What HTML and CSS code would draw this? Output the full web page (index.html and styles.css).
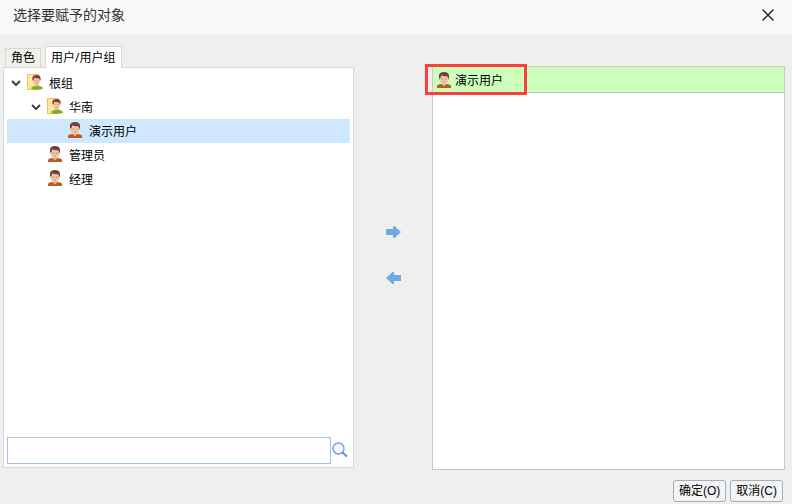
FILE: index.html
```html
<!DOCTYPE html>
<html lang="zh-CN">
<head>
    <meta charset="utf-8">
    <title>选择要赋予的对象</title>
    <link rel="stylesheet" href="styles.css">
</head>
<body>
    <!-- shared icons -->
    <svg class="defs" aria-hidden="true">
        <symbol id="face" viewBox="0 0 16 16">
            <path d="M6 10h4v3H6z" fill="#d9a47f"/>
            <path d="M3 5.500h10v2.500H3z" fill="#d9a688"/>
            <path d="M4 3.500h8v5c0 2.200-2 4-4 4s-4-1.800-4-4z" fill="#efc6a2"/>
            <path d="M3 6.200V3.500C3 1.400 5 0 8 0c3.200 0 5 1.500 5 3.800v2.400h-1L11.500 4.200C9 4.300 6.500 4 5.500 3.200L4.200 6.200z" fill="#743b40"/>
            <path d="M5.500 6.500h1.500v1H5.500zM9 6.500h1.500v1H9z" fill="#b08d76"/>
            <path d="M7 9.500h2v1H7z" fill="#d08874"/>
        </symbol>
        <symbol id="user" viewBox="0 0 16 16">
            <path d="M1 16v-2C1 12.500 3 12.500 5.500 12h5c2.500.500 4.500.500 4.500 2v2z" fill="#b85a22"/>
            <path d="M5.500 12h5L8 14.500z" fill="#e2ad86"/>
            <use href="#face"/>
        </symbol>
        <symbol id="group" viewBox="0 0 16 16">
            <path d="M.5.500h11v15H.5z" fill="#ffe9a0" stroke="#ecc54a"/>
            <path d="M4 14.500c0-1.500 2-2.500 4.500-2.500h3c2.500 0 4.500 1 4.500 2.500-2 1.800-10 1.800-12 0z" fill="#7fae27"/>
            <use href="#face" x="3" y="1" width="13" height="13"/>
        </symbol>
        <symbol id="chevron" viewBox="0 0 10 6">
            <path d="M1 1l4 4 4-4" fill="none" stroke="#404040" stroke-width="2"/>
        </symbol>
    </svg>

    <div class="dialog">
        <header class="title-bar">
            <h1 class="title">选择要赋予的对象</h1>
            <button class="close" aria-label="关闭">
                <svg width="12" height="12" viewBox="0 0 12 12"><path d="M.5.500l11 11M11.500.500l-11 11" stroke="#28283a" stroke-width="1.500"/></svg>
            </button>
        </header>

        <main class="content">
            <section class="source">
                <div class="tabs" role="tablist">
                    <button class="tab" role="tab" aria-selected="false">角色</button>
                    <button class="tab active" role="tab" aria-selected="true">用户/用户组</button>
                </div>
                <div class="panel">
                    <ul class="tree" role="tree">
                        <li class="row" role="treeitem" aria-level="1" aria-expanded="true">
                            <button class="twisty" aria-label="折叠根组"><svg width="10" height="6"><use href="#chevron"/></svg></button>
                            <svg class="icon"><use href="#group"/></svg>
                            <span class="name">根组</span>
                        </li>
                        <li class="row level-2" role="treeitem" aria-level="2" aria-expanded="true">
                            <button class="twisty" aria-label="折叠华南"><svg width="10" height="6"><use href="#chevron"/></svg></button>
                            <svg class="icon"><use href="#group"/></svg>
                            <span class="name">华南</span>
                        </li>
                        <li class="row level-3 selected" role="treeitem" aria-level="3" aria-selected="true">
                            <span class="twisty"></span>
                            <svg class="icon"><use href="#user"/></svg>
                            <span class="name">演示用户</span>
                        </li>
                        <li class="row level-2" role="treeitem" aria-level="2">
                            <span class="twisty"></span>
                            <svg class="icon"><use href="#user"/></svg>
                            <span class="name">管理员</span>
                        </li>
                        <li class="row level-2" role="treeitem" aria-level="2">
                            <span class="twisty"></span>
                            <svg class="icon"><use href="#user"/></svg>
                            <span class="name">经理</span>
                        </li>
                    </ul>
                    <div class="search">
                        <input class="search-box" type="text" aria-label="搜索">
                        <button class="search-button" aria-label="搜索">
                            <svg width="16" height="16" viewBox="0 0 16 16">
                                <circle cx="6.500" cy="6.500" r="5.500" fill="#f6faff" stroke="#7ba3e3" stroke-width="1.500"/>
                                <path d="M10.500 10.500l4.500 4" stroke="#6390dc" stroke-width="2"/>
                            </svg>
                        </button>
                    </div>
                </div>
            </section>

            <div class="transfer">
                <button class="arrow" aria-label="添加">
                    <svg width="16" height="12" viewBox="0 0 16 12"><path d="M0 3h7V0h1.500L15 6l-6.500 6H7V9H0z" fill="#6eabe5"/></svg>
                </button>
                <button class="arrow" aria-label="移除">
                    <svg width="16" height="12" viewBox="0 0 16 12"><path d="M15 3H8V0H6.500L0 6l6.500 6H8V9h7z" fill="#6eabe5"/></svg>
                </button>
            </div>

            <ul class="chosen">
                <li class="chosen-row">
                    <svg class="icon"><use href="#user"/></svg>
                    <span class="chosen-name">演示用户</span>
                    <span class="marker"></span>
                </li>
            </ul>
        </main>

        <footer class="actions">
            <button class="action">确定(O)</button>
            <button class="action">取消(C)</button>
        </footer>
    </div>
</body>
</html>
```

FILE: styles.css
```css
* {
    box-sizing: border-box;
}
body {
    margin: 0;
    background: #f0efed;
    color: #000;
    font-family: "Noto Sans", "Noto Sans CJK SC", sans-serif;
    font-size: 12px;
    line-height: 16px;
}
button {
    margin: 0;
    padding: 0;
    border: 0;
    background: none;
    color: inherit;
    font: inherit;
    cursor: pointer;
}
ul {
    margin: 0;
    padding: 0;
    list-style: none;
}
svg {
    display: block;
}
.defs {
    position: absolute;
    width: 0;
    height: 0;
}
.dialog {
    display: flex;
    flex-direction: column;
    min-height: 100vh;
}

/* title bar */
.title-bar {
    display: flex;
    align-items: center;
    justify-content: space-between;
    padding: 5px 18px 10px 13px;
    background: #f8f8f8;
}
.title {
    margin: 0;
    color: #333;
    font-size: 14px;
    font-weight: normal;
    line-height: 20px;
}

.content {
    flex: 1;
    display: grid;
    grid-template-columns: 351fr 78px 353fr;
    padding: 11px 7px 0 3px;
}

/* left side */
.source {
    display: flex;
    flex-direction: column;
    padding-bottom: 2px;
}
.tabs {
    display: flex;
    align-items: flex-end;
    gap: 4px;
    padding-left: 2px;
}
.tab {
    padding: 1px 5px;
    border: 1px solid #d8d9d5;
    border-bottom: 0;
    background: #eff0ea;
}
.tab.active {
    position: relative;
    margin-bottom: -1px;
    padding: 3px 6px 2px 5px;
    background: #fff;
}
.panel {
    flex: 1;
    display: flex;
    flex-direction: column;
    padding: 3px;
    border: 1px solid #d8d8d8;
    background: #fff;
}
.tree {
    flex: 1;
}
.row {
    display: flex;
    align-items: center;
    height: 24px;
}
.level-2 {
    padding-left: 20px;
}
.level-3 {
    padding-left: 40px;
}
.selected {
    background: #cde8ff;
}
.twisty {
    width: 20px;
    padding-left: 4px;
}
.icon {
    width: 16px;
    height: 16px;
    margin-bottom: 2px;
}
.name {
    padding-top: 2px;
    margin-left: 6px;
}
.search {
    display: flex;
    align-items: center;
}
.search-box {
    flex: 1;
    height: 27px;
    padding: 0 4px;
    border: 1px solid #a6c1e8;
    background: #fff;
    font: inherit;
}
.search-button {
    padding: 0 2px 2px 1px;
}

/* arrows */
.transfer {
    display: flex;
    flex-direction: column;
    align-items: center;
    justify-content: center;
    gap: 34px;
    padding: 0 0 6px 2px;
}

/* right side */
.chosen {
    margin-top: 20px;
    border: 1px solid #c8c8c8;
    background: #fff;
}
.chosen-row {
    position: relative;
    display: flex;
    align-items: center;
    gap: 3px;
    height: 26px;
    padding-left: 3px;
    border-bottom: 1px solid #c8c8c8;
    background: #ccffbb;
}
.chosen-row .icon {
    margin-bottom: 0;
}
.chosen-name {
    padding-top: 2px;
}
.marker {
    position: absolute;
    top: -3px;
    left: -8px;
    width: 102px;
    height: 31px;
    border: 3px solid #f9403b;
}

.actions {
    display: flex;
    justify-content: flex-end;
    gap: 4px;
    padding: 10px 9px 2px;
}
.action {
    padding: 2px 5px;
    border: 1px solid #9fb0c0;
    border-radius: 3px;
    background: #f4f4f4;
    font-family: "Liberation Sans", "Noto Sans CJK SC", sans-serif;
}
```
